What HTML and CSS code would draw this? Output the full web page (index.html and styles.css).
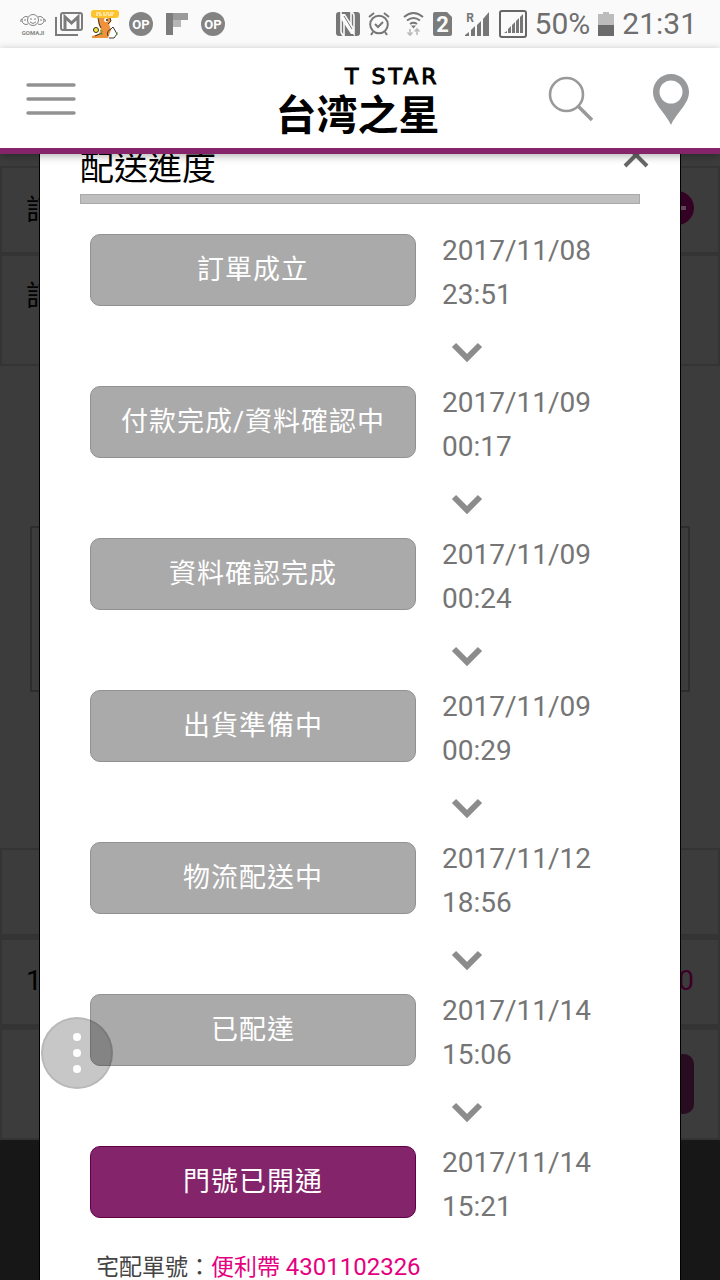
FILE: index.html
```
<!DOCTYPE html>
<html lang="zh-Hant">
<head>
    <meta charset="UTF-8">
    <meta name="viewport" content="width=device-width, initial-scale=1.0">
    <title>台湾之星 配送進度</title>
    <link rel="stylesheet" href="styles.css">
</head>
<body>
    <div class="status-bar">
        <div class="status-left">
            <svg width="28" height="24" viewBox="0 0 28 24" fill="none" stroke="#858585">
                <circle cx="14" cy="8" r="5.5"/>
                <path d="M9 5a4 4 0 1 0 0 7M19 5a4 4 0 1 1 0 7M3 7Q1 7 2 10M25 7q2 0 1 3M11 10q3 3 6 0"/>
                <path d="M11 7h2M15 7h2M5 8h2M21 8h2"/>
                <text x="14" y="23" class="tiny-brand">GOMAJI</text>
            </svg>
            <svg width="28" height="24" viewBox="0 0 28 24" fill="none" stroke="#7c7c7c">
                <path d="M1 5v18h22" stroke-width="2"/>
                <rect x="6" y="1" width="21" height="17" rx="2" stroke-width="2"/>
                <path d="M10 18V5l6.500 6L23 5v13" stroke-width="3"/>
            </svg>
            <svg width="28" height="28" viewBox="0 0 28 28">
                <rect x="1" y="4" width="26" height="24" fill="#fff"/>
                <path d="M8 7q3-3 8 0 5 0 4 4-1 3-2 3l2 6-3 8H1v-2l7-2 2-5q-4-5-2-12z" fill="#f0923c"/>
                <rect width="28" height="8" y="0" rx="3" fill="#fdc42d"/>
                <path d="M5 3h5M12 3h2M15 3h3M19 3h4M5 5h2M8 5h3M12 5h4M17 5h5" stroke="#fff"/>
                <path d="M7 8q1 7 3 10M19 8l1 3-3 3M20 19q-5 2-3 7M20 19l2-2 4 7-3 4h-5M2 19l3 2M4 26l7-3" stroke="#39372c" fill="none"/>
                <circle cx="5" cy="20" r="2.500" fill="#f6e936" stroke="#333"/>
                <circle cx="15" cy="10" r="2" fill="#fff"/>
                <circle cx="16" cy="10" r="1" fill="#222"/>
                <path d="M9 20l3 2M8 24h4M26 22v3" stroke="#5da145"/>
            </svg>
            <svg width="24" height="24" viewBox="0 0 24 24">
                <circle cx="12" cy="12" r="12" fill="#838383"/>
                <text x="12" y="17" class="badge-text">OP</text>
            </svg>
            <svg width="22" height="22" viewBox="0 0 22 22">
                <path d="M0 0h7v22H0z" fill="#7c7c7c"/>
                <path d="M7 0h15v7H7z" fill="#9a9a9a"/>
                <path d="M7 7h8v7H7z" fill="#b6b6b6"/>
            </svg>
            <svg width="24" height="24" viewBox="0 0 24 24">
                <circle cx="12" cy="12" r="12" fill="#838383"/>
                <text x="12" y="17" class="badge-text">OP</text>
            </svg>
        </div>
        <div class="status-right">
            <svg width="24" height="24" viewBox="0 0 24 24">
                <rect width="24" height="24" rx="3" fill="#777"/>
                <path d="M5 0v19q0 3 3 5M5 2l13 20V4q0-3-3-4M8 6v18M15 0v17" stroke="#fafafa" stroke-width="1.600" fill="none"/>
                <path d="M5 2h4l9 14v6h-3L5 7z" fill="#fafafa"/>
                <path d="M8 4l8 13" stroke="#777"/>
            </svg>
            <svg width="22" height="24" viewBox="0 0 22 24" fill="none" stroke="#777" stroke-width="2">
                <circle cx="11" cy="12.500" r="8.800"/>
                <path d="M7 12l3 3 5-5M1 5l5-4M21 5l-5-4M5 20l-2 3M17 20l2 3"/>
            </svg>
            <svg width="27" height="24" viewBox="0 0 27 24" fill="none" stroke="#777" stroke-width="2">
                <path d="M6 5q9.500-8 19 0M9 8.500q6.500-5 13 0M12 12q3.500-2.500 7 0"/>
                <path d="M13 13.500h5l-2.500 3z" fill="#777" stroke="none"/>
                <path d="M12 17v6M9.500 20.500L12 23l2.500-2.500M19 23v-6M16.500 19.500L19 17l2.500 2.500" stroke="#bbb" stroke-width="1.600"/>
            </svg>
            <svg width="20" height="24" viewBox="0 0 20 24">
                <path d="M2 0h12l5 5v17q0 2-2 2H2q-2 0-2-2V2q0-2 2-2z" fill="#7b7b7b"/>
                <text x="9.500" y="20" class="sim-text">2</text>
            </svg>
            <svg width="30" height="24" viewBox="0 0 30 24" fill="#777">
                <text x="9" y="10" class="roam-text">R</text>
                <path d="M4 24v-1l4-3v4zM10 24v-6l4-4v10zM16 24V13l4-4v15zM22 24V7l6-7v24z"/>
            </svg>
            <svg width="28" height="28" viewBox="0 0 28 28" fill="#777">
                <rect x="1" y="1" width="26" height="26" rx="2" fill="none" stroke="#666" stroke-width="2"/>
                <path d="M5 23l3-2v2zM9 23v-4l3-3v7zM13 23v-8l3-3v11zM17 23V11l3-3v15zM21 23V7l3-3v19z"/>
            </svg>
            <span>50%</span>
            <svg width="16" height="24" viewBox="0 0 16 24">
                <path d="M0 2h5V0h6v2h5v11H0z" fill="#bcbcbc"/>
                <path d="M0 13h16v11H0z" fill="#6b6b6b"/>
            </svg>
            <span>21:31</span>
        </div>
    </div>

    <header class="site-header">
        <button type="button" class="icon-button" aria-label="選單">
            <svg width="50" height="34" viewBox="0 0 50 34" stroke="#929292" stroke-width="3.400" stroke-linecap="round">
                <path d="M2 3h46M2 17h46M2 31h46"/>
            </svg>
        </button>
        <a href="#" class="logo">
            <span class="logo-en">T STAR</span>
            <span class="logo-zh">台湾之星</span>
        </a>
        <div class="header-actions">
            <button type="button" class="icon-button" aria-label="搜尋">
                <svg width="46" height="46" viewBox="0 0 46 46" fill="none" stroke="#98999b" stroke-width="2.600">
                    <circle cx="18.500" cy="18.500" r="16.500"/>
                    <path d="M30 30l14 14" stroke-width="3.500"/>
                </svg>
            </button>
            <button type="button" class="icon-button" aria-label="門市">
                <svg width="36" height="51" viewBox="0 0 36 51">
                    <path d="M18 0C8 0 0 8 0 18c0 12 12 20 18 33 6-13 18-21 18-33C36 8 28 0 18 0zm0 6.500a11.500 11.500 0 1 1 0 23 11.500 11.500 0 0 1 0-23z" fill="#98999b" fill-rule="evenodd"/>
                </svg>
            </button>
        </div>
    </header>

    <main class="content">
        <div class="page">
            <section class="order-box">
                <div class="order-row">
                    <span>訂單</span>
                    <svg width="34" height="34" viewBox="0 0 34 34">
                        <circle cx="17" cy="17" r="17" fill="#340023"/>
                        <path d="M9 17h17" stroke="#64465a" stroke-width="4"/>
                    </svg>
                </div>
                <div class="order-row order-row-tall">訂單</div>
            </section>
            <div class="order-detail"></div>
            <section class="order-box order-box-total">
                <div class="order-row"></div>
                <div class="order-row"><span>1</span><span class="amount">0</span></div>
                <div class="order-row order-row-tall order-row-action"><span class="action"></span></div>
            </section>
            <footer class="page-footer"></footer>
        </div>

        <div class="overlay">
            <div class="modal" role="dialog" aria-labelledby="modalTitle">
                <div class="modal-head">
                    <h1 id="modalTitle">配送進度</h1>
                    <button type="button" class="icon-button modal-close" aria-label="關閉">
                        <svg width="24" height="24" viewBox="0 0 24 24" stroke="#686868" stroke-width="4">
                            <path d="M1 1l22 22M23 1L1 23"/>
                        </svg>
                    </button>
                </div>
                <div class="divider"></div>
                <ol class="steps" id="steps"></ol>
                <p class="tracking">宅配單號：<a href="#">便利帶 <span class="tracking-no">4301102326</span></a></p>
            </div>
        </div>
    </main>

    <button type="button" class="float-button" aria-label="更多">
        <span></span><span></span><span></span>
    </button>

    <script src="script.js"></script>
</body>
</html>
```

FILE: styles.css
```
* {
    box-sizing: border-box;
}
body {
    margin: 0;
    height: 100vh;
    display: flex;
    flex-direction: column;
    overflow: hidden;
    font-family: Roboto, "Noto Sans CJK TC", sans-serif;
    background-color: #3c3c3c;
}
svg {
    display: block;
    flex: none;
    overflow: visible;
}
a {
    text-decoration: none;
}
.icon-button {
    padding: 0;
    border: none;
    background: none;
    cursor: pointer;
}

/* phone status bar */
.status-bar {
    flex: none;
    display: flex;
    justify-content: space-between;
    height: 48px;
    padding: 0 23px 0 15px;
    background-color: #fafafa;
    color: #6e6e6e;
    font-size: 30px;
    line-height: 50px;
}
.status-left,
.status-right {
    display: flex;
    align-items: center;
}
.status-left {
    display: grid;
    grid-template-columns: repeat(6, 36px);
    justify-items: center;
}
.status-right {
    gap: 8px;
}
.tiny-brand,
.badge-text,
.sim-text {
    text-anchor: middle;
    stroke: none;
    font-weight: bold;
}
.tiny-brand {
    font-size: 6px;
    fill: #858585;
}
.badge-text {
    font-size: 13px;
    fill: #fff;
}
.sim-text {
    font-size: 22px;
    fill: #fafafa;
}
.roam-text {
    font-size: 12px;
    font-weight: bold;
    text-anchor: middle;
}

/* header */
.site-header {
    position: relative;
    z-index: 2;
    flex: none;
    display: grid;
    grid-template-columns: 1fr auto 1fr;
    align-items: center;
    height: 106px;
    padding: 2px 31px 0 26px;
    background-color: #fff;
    border-bottom: 6px solid #86246b;
    box-shadow: 0 2px 8px rgba(0, 0, 0, 0.3);
}
.logo {
    display: flex;
    flex-direction: column;
    color: #000;
}
.logo-en {
    align-self: flex-end;
    font-family: "DejaVu Sans", sans-serif;
    font-size: 22px;
    line-height: 26px;
    letter-spacing: 3px;
    -webkit-text-stroke: 1px #000;
}
.logo-zh {
    font-family: "Noto Sans CJK TC", sans-serif;
    font-size: 41px;
    font-weight: bold;
    line-height: 44px;
}
.header-actions {
    display: flex;
    justify-content: flex-end;
    align-items: center;
    gap: 59px;
}

/* dimmed order page */
.content {
    position: relative;
    flex: 1;
    overflow: hidden;
}
.page {
    padding-top: 12px;
    color: #000;
    font-size: 28px;
}
.order-box {
    background-color: #343434;
    padding: 2px;
    display: flex;
    flex-direction: column;
    gap: 4px;
}
.order-box-total {
    gap: 6px;
}
.order-row {
    display: flex;
    justify-content: space-between;
    align-items: center;
    height: 84px;
    padding: 0 24px 4px;
    background-color: #3c3c3c;
}
.order-row-tall {
    height: 108px;
    align-items: flex-start;
    padding-top: 18px;
}
.amount {
    color: #3d0027;
}
.order-detail {
    height: 166px;
    margin: 160px 30px 156px;
    border: 2px solid #2d2d2d;
}
.order-row-action {
    justify-content: flex-end;
    padding-top: 24px;
}
.action {
    width: 160px;
    height: 60px;
    border-radius: 10px;
    background-color: #280c1f;
}
.page-footer {
    height: 240px;
    background-color: #171717;
}

/* progress dialog */
.overlay {
    position: absolute;
    inset: 0;
    padding: 0 39px;
    overflow: hidden;
}
.modal {
    margin-top: -52px;
    padding: 40px;
    background-color: #fff;
    border: 1px solid #000;
}
.modal-head {
    display: flex;
    justify-content: space-between;
    align-items: flex-start;
}
.modal-head h1 {
    margin: 0;
    font-size: 34px;
    font-weight: normal;
    line-height: 50px;
}
.modal-close {
    margin-right: -8px;
}
.divider {
    height: 10px;
    margin-top: 1px;
    background-color: #bfbfbf;
    border: 1px solid #a9a9a9;
}
.steps {
    margin: 25px 0 0;
    padding: 0 0 0 10px;
    list-style: none;
}
.step {
    display: grid;
    grid-template-columns: 326fr 198fr;
    column-gap: 26px;
    align-items: start;
}
.step-button {
    height: 72px;
    margin: 5px 0 0;
    padding: 0 0 6px;
    border: 1px solid #919191;
    border-radius: 10px;
    background-color: #aaa;
    color: #fff;
    font-family: inherit;
    font-size: 27px;
    letter-spacing: 1px;
}
.step-button.active {
    border-color: #610047;
    background-color: #84246a;
}
.step-time {
    display: flex;
    flex-direction: column;
    color: #757575;
    font-size: 28px;
    line-height: 44px;
}
.step-arrow {
    margin: 26px 0 18px 10px;
}
.tracking {
    margin: 18px 0 0;
    padding-left: 16px;
    color: #444;
    font-size: 23px;
    line-height: 40px;
}
.tracking a {
    color: #e4007f;
}
.tracking-no {
    font-size: 24px;
}

/* floating assistant button */
.float-button {
    position: fixed;
    left: 41px;
    bottom: 191px;
    z-index: 3;
    display: flex;
    flex-direction: column;
    justify-content: center;
    align-items: center;
    gap: 8px;
    width: 72px;
    height: 72px;
    padding: 0;
    border: 2px solid rgba(0, 0, 0, 0.08);
    border-radius: 50%;
    background-color: rgba(0, 0, 0, 0.22);
}
.float-button span {
    width: 8px;
    height: 8px;
    border-radius: 50%;
    background-color: #fff;
}
```

FILE: script.js
```
const steps = [
    { name: '訂單成立', date: '2017/11/08', time: '23:51' },
    { name: '付款完成/資料確認中', date: '2017/11/09', time: '00:17' },
    { name: '資料確認完成', date: '2017/11/09', time: '00:24' },
    { name: '出貨準備中', date: '2017/11/09', time: '00:29' },
    { name: '物流配送中', date: '2017/11/12', time: '18:56' },
    { name: '已配達', date: '2017/11/14', time: '15:06' },
    { name: '門號已開通', date: '2017/11/14', time: '15:21' }
];

const arrow = `
    <svg class="step-arrow" width="30" height="20" viewBox="0 0 30 20">
        <path d="M2 2l13 13L28 2" fill="none" stroke="#8c8c8c" stroke-width="6"/>
    </svg>
`;

document.getElementById('steps').innerHTML = steps.map((step, i) => {
    const last = i === steps.length - 1;
    return `
        <li class="step">
            <button type="button" class="step-button${last ? ' active' : ''}">${step.name}</button>
            <div class="step-time">
                <span>${step.date}</span>
                <span>${step.time}</span>
                ${last ? '' : arrow}
            </div>
        </li>
    `;
}).join('');
```
